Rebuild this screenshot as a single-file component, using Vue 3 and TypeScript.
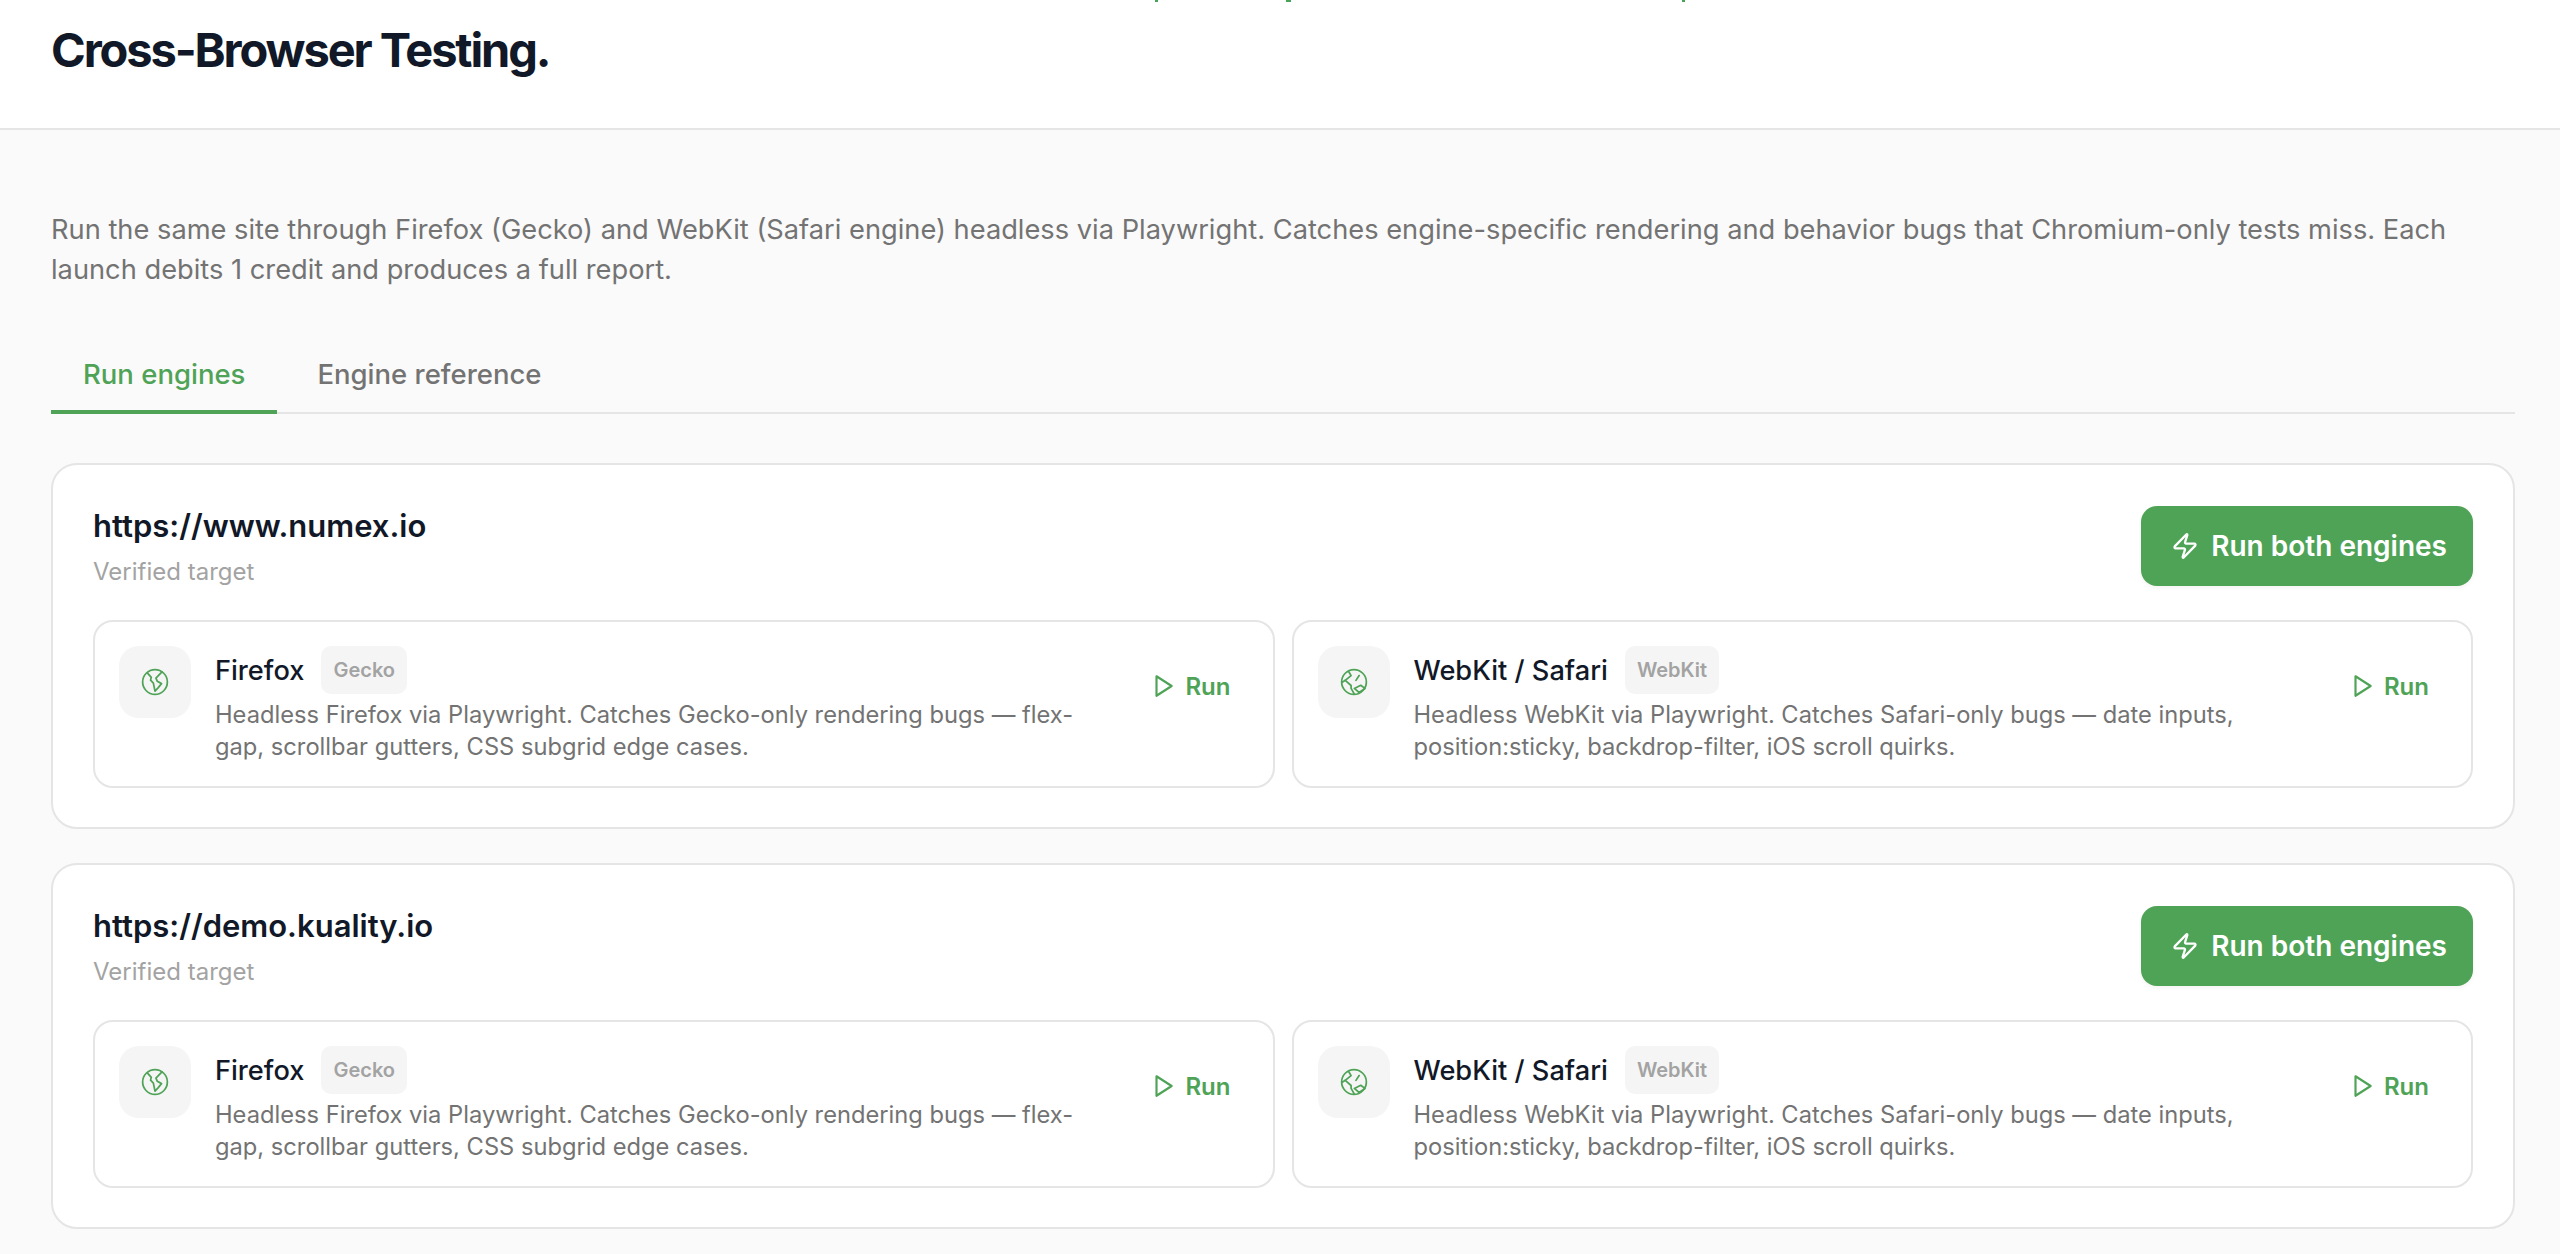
<script setup lang="ts">
interface Engine {
  name: string
  tag: string
  desc: string
  kind: 'firefox' | 'webkit'
}

const engines: Engine[] = [
  {
    name: 'Firefox',
    tag: 'Gecko',
    kind: 'firefox',
    desc: 'Headless Firefox via Playwright. Catches Gecko-only rendering bugs — flex-gap, scrollbar gutters, CSS subgrid edge cases.',
  },
  {
    name: 'WebKit / Safari',
    tag: 'WebKit',
    kind: 'webkit',
    desc: 'Headless WebKit via Playwright. Catches Safari-only bugs — date inputs, position:sticky, backdrop-filter, iOS scroll quirks.',
  },
]

const targets = ['https://www.numex.io', 'https://demo.kuality.io']
</script>

<template>
  <div class="page">
    <header class="topbar">
      <!-- bottom edge of the line scrolled off above the title -->
      <div class="cut-line"><i></i><i class="wide"></i><i></i></div>
      <h1>Cross-Browser Testing.</h1>
    </header>

    <main class="content">
      <p class="intro">
        Run the same site through Firefox (Gecko) and WebKit (Safari engine) headless via Playwright. Catches engine-specific rendering and behavior bugs that Chromium-only tests miss. Each launch debits 1 credit and produces a full report.
      </p>

      <nav class="tabs">
        <button class="tab active">Run engines</button>
        <button class="tab">Engine reference</button>
      </nav>

      <section v-for="url in targets" :key="url" class="target">
        <div class="target-head">
          <div>
            <div class="url">{{ url }}</div>
            <div class="verified">Verified target</div>
          </div>
          <button class="run-both">
            <svg viewBox="0 0 24 24" class="zap">
              <path d="M4 14a1 1 0 0 1-.78-1.63l9.9-10.2a.5.5 0 0 1 .86.46l-1.92 6.02A1 1 0 0 0 13 10h7a1 1 0 0 1 .78 1.63l-9.9 10.2a.5.5 0 0 1-.86-.46l1.92-6.02A1 1 0 0 0 11 14z" />
            </svg>
            Run both engines
          </button>
        </div>

        <div class="engines">
          <article v-for="e in engines" :key="e.name" class="engine">
            <div class="engine-icon">
              <svg viewBox="0 0 24 24" class="globe">
                <circle cx="12" cy="12" r="10.6" />
                <template v-if="e.kind === 'firefox'">
                  <path d="M5.6 4.4 8.8 8 8.2 10.4 10.6 13 12 19.8 14.6 17 17.6 13.4 14 11.4 12.8 8.6 18 3.4" />
                </template>
                <template v-else>
                  <path d="M7.3 2.8 9.5 6.5 4.5 10.6 1.6 12.4" />
                  <path d="M4.5 10.6 9.5 15 9.5 17.5 12.3 22.4" />
                  <path d="M12.3 17.5 17.8 14.8 21.4 17.5 16.4 21Z" />
                  <path d="M16.4 6.5 13.7 10.6" />
                </template>
              </svg>
            </div>
            <div class="engine-body">
              <div class="engine-title">
                <span class="engine-name">{{ e.name }}</span>
                <span class="engine-tag">{{ e.tag }}</span>
              </div>
              <p class="engine-desc">{{ e.desc }}</p>
            </div>
            <button class="run">
              <svg viewBox="0 0 24 24" class="play"><polygon points="6 3 20 12 6 21 6 3" /></svg>
              Run
            </button>
          </article>
        </div>
      </section>
    </main>
  </div>
</template>

<style>
html,
body {
  margin: 0;
  background: #fafafa;
}
</style>

<style scoped>
.page {
  height: 1254px;
  overflow: hidden;
  background: #fafafa;
  font-family: Inter, "Liberation Sans", sans-serif;
  color: #111827;
}

.topbar {
  height: 128px;
  background: #fff;
  border-bottom: 2px solid #e5e5e5;
  padding: 0 51px;
}

.cut-line {
  display: flex;
  gap: 128px;
  height: 2px;
  margin-left: 1104px;
}

.cut-line i {
  width: 3px;
  background: #45a35a;
}

.cut-line i.wide {
  width: 5px;
  margin-right: 263px;
}

h1 {
  margin: 0;
  padding-top: 20px;
  font-size: 47px;
  line-height: 56px;
  font-weight: 700;
  letter-spacing: -2.1px;
}

.content {
  padding: 80px 45px 0 51px;
}

.intro {
  margin: 0;
  font-size: 27.25px;
  line-height: 40px;
  color: #737373;
}

.tabs {
  display: flex;
  gap: 8px;
  margin-top: 48px;
  border-bottom: 2px solid #e5e5e5;
}

.tab {
  border: 0;
  background: none;
  font: inherit;
  font-size: 27.5px;
  font-weight: 500;
  line-height: 40px;
  padding: 16px 32px;
  margin-bottom: -2px;
  color: #737373;
  border-bottom: 4px solid transparent;
}

.tab.active {
  color: #4fa357;
  border-bottom-color: #4fa357;
}

.target {
  background: #fff;
  border: 2px solid #e5e5e5;
  border-radius: 26px;
  padding: 41px 40px 40px;
  margin-top: 34px;
  height: 366px;
  box-sizing: border-box;
}

.tabs + .target {
  margin-top: 49px;
}

.target-head {
  display: flex;
  justify-content: space-between;
  align-items: flex-start;
}

.url {
  font-size: 31px;
  line-height: 40px;
  font-weight: 600;
}

.verified {
  margin-top: 10px;
  font-size: 24px;
  line-height: 32px;
  color: #a3a3a3;
}

.run-both {
  display: flex;
  align-items: center;
  gap: 12px;
  height: 80px;
  padding: 0 26px 0 30px;
  border: 0;
  border-radius: 16px;
  background: #4fa357;
  color: #fff;
  font: inherit;
  font-size: 28px;
  font-weight: 600;
  box-shadow: 0 2px 4px rgba(0, 0, 0, 0.05);
}

.zap {
  width: 28px;
  height: 28px;
  fill: none;
  stroke: #fff;
  stroke-width: 2;
  stroke-linecap: round;
  stroke-linejoin: round;
}

.engines {
  display: grid;
  grid-template-columns: 1fr 1fr;
  gap: 17px;
  margin-top: 32px;
}

.engine {
  display: flex;
  align-items: flex-start;
  height: 168px;
  box-sizing: border-box;
  padding: 24px;
  gap: 24px;
  border: 2px solid #e5e5e5;
  border-radius: 20px;
}

.engine-icon {
  flex: none;
  display: flex;
  align-items: center;
  justify-content: center;
  width: 72px;
  height: 72px;
  border-radius: 20px;
  background: #f5f5f5;
}

.globe {
  width: 28px;
  height: 28px;
  fill: none;
  stroke: #4fa357;
  stroke-width: 1.5;
  stroke-linecap: round;
  stroke-linejoin: round;
}

.engine-body {
  flex: 1;
  min-width: 0;
}

.engine-title {
  display: flex;
  align-items: center;
  gap: 17px;
  height: 48px;
}

.engine-name {
  font-size: 27.2px;
  font-weight: 500;
}

.engine-tag {
  display: flex;
  align-items: center;
  height: 48px;
  padding: 0 12px;
  border-radius: 10px;
  background: #f5f5f5;
  color: #a3a3a3;
  font-size: 20px;
  font-weight: 600;
}

.engine-desc {
  margin: 5px 0 0;
  font-size: 23.7px;
  line-height: 32px;
  color: #737373;
}

.run {
  flex: none;
  display: flex;
  align-items: center;
  gap: 9px;
  height: 80px;
  padding: 0 18px 0 33px;
  border: 0;
  background: none;
  font: inherit;
  font-size: 24px;
  font-weight: 600;
  color: #4fa357;
}

.play {
  width: 26px;
  height: 26px;
  fill: none;
  stroke: #4fa357;
  stroke-width: 2;
  stroke-linecap: round;
  stroke-linejoin: round;
}
</style>
